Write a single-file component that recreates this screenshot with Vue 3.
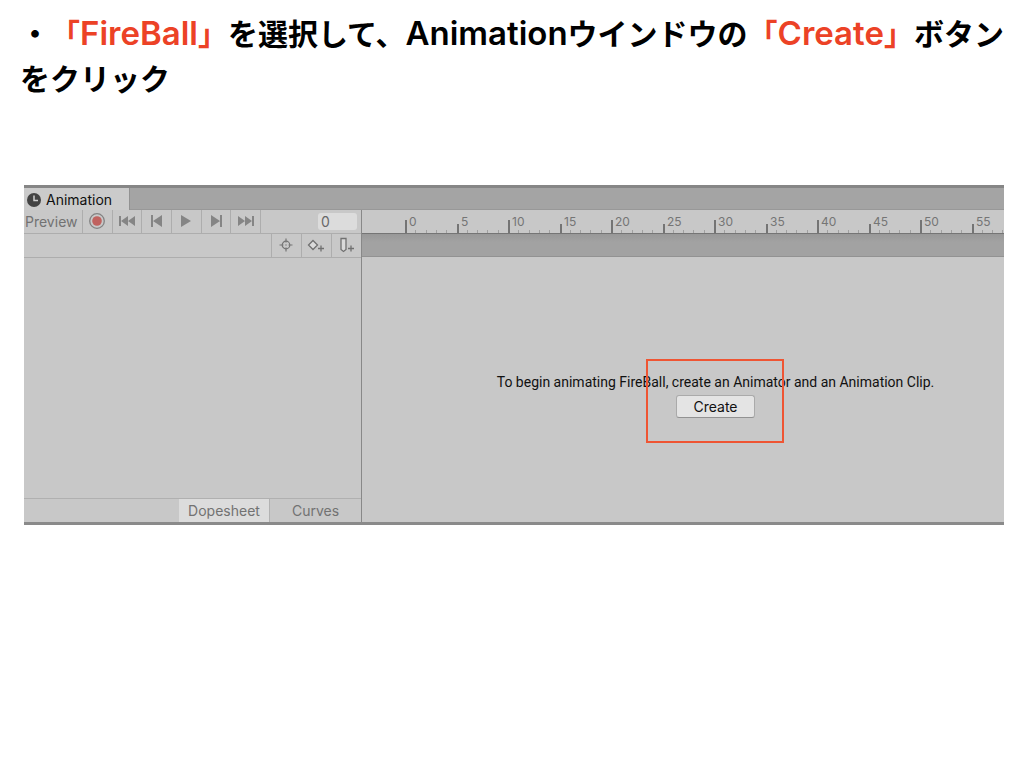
<script setup>
import { computed, onBeforeUnmount, onMounted, ref } from 'vue'

const frame = ref('0')
const mode = ref('Dopesheet')

const origin = 43
const ruler = ref(null)
const rulerWidth = ref(0)
let observer

onMounted(() => {
  const measure = () => {
    rulerWidth.value = ruler.value.getBoundingClientRect().width
  }
  measure()
  observer = new ResizeObserver(measure)
  observer.observe(ruler.value)
})
onBeforeUnmount(() => observer.disconnect())

const ticks = computed(() => {
  const count = Math.max(0, Math.floor((rulerWidth.value - origin) / 10.3) + 1)
  return Array.from({ length: count }, (_, n) => {
    const x = Math.round(origin + n * 10.3)
    if (n % 10 === 0) return { n, x, y: 10, kind: 'major' }
    if (n % 5 === 0) return { n, x, y: 14, kind: 'major' }
    return { n, x, y: 20, kind: 'minor' }
  })
})
const labels = computed(() => ticks.value.filter((t) => t.kind === 'major' && t.x + 20 < rulerWidth.value))

const transport = [
  { name: 'First frame', d: 'M1 3h2v10h-2zM10 3v10l-7-5zM17 3v10l-7-5z' },
  { name: 'Previous frame', d: 'M3 2h2v12h-2zM14 2v12l-9-6z' },
  { name: 'Play', d: 'M4 2l10 6l-10 6z' },
  { name: 'Next frame', d: 'M4 2v12l9-6zM13 2h2v12h-2z' },
  { name: 'Last frame', d: 'M1 3v10l7-5zM8 3v10l7-5zM15 3h2v10h-2z' },
]
</script>

<template>
  <main class="slide">
    <h1 class="title">
      ・<span class="hot">「<span class="latin">FireBall</span>」</span>を選択して、<span class="latin">Animation</span>ウインドウの<span class="hot">「<span class="latin">Create</span>」</span>ボタンをクリック
    </h1>

    <section class="window" aria-label="Animation">
      <header class="tabs">
        <div class="tab">
          <svg width="14" height="14" viewBox="0 0 14 14" aria-hidden="true">
            <circle cx="7" cy="7" r="7" fill="#434343" />
            <path d="M7 2.5v5h4" fill="none" stroke="#d0d0d0" stroke-width="1.5" />
          </svg>
          <span>Animation</span>
        </div>
      </header>

      <div class="body">
        <aside class="side">
          <div class="bar">
            <button class="preview" type="button">Preview</button>
            <div class="transport">
              <button class="tool" type="button" aria-label="Record">
                <svg width="18" height="18" viewBox="0 0 18 18">
                  <circle cx="9" cy="9" r="7.3" fill="none" stroke="#828282" stroke-width="1.3" />
                  <circle cx="9" cy="9" r="4.8" fill="#c0625f" />
                </svg>
              </button>
              <button v-for="t in transport" :key="t.name" class="tool" type="button" :aria-label="t.name">
                <svg width="18" height="16" viewBox="0 0 18 16"><path :d="t.d" fill="#858585" /></svg>
              </button>
            </div>
            <input v-model="frame" class="frame" type="text" aria-label="Current frame" />
          </div>

          <div class="bar bar-keys">
            <button class="tool key" type="button" aria-label="Filter by selection">
              <svg width="14" height="14" viewBox="0 0 14 14" fill="none" stroke="#747474" stroke-width="1.2">
                <circle cx="7" cy="7" r="3.8" />
                <path d="M7 0.5v4M7 9.5v4M0.5 7h4M9.5 7h4" />
                <circle cx="7" cy="7" r="0.7" fill="#747474" stroke="none" />
              </svg>
            </button>
            <button class="tool key" type="button" aria-label="Add keyframe">
              <svg width="18" height="18" viewBox="0 0 18 18" fill="none" stroke="#707070" stroke-width="1.3">
                <path d="M6 4.5l4.5 4.5l-4.5 4.5l-4.5-4.5z" fill="#dadada" />
                <path d="M14 9.5v6M11 12.5h6" />
              </svg>
            </button>
            <button class="tool key" type="button" aria-label="Add event">
              <svg width="18" height="18" viewBox="0 0 18 18" fill="none" stroke="#707070" stroke-width="1.3">
                <path d="M4 2.5h5v11l-2.5 2l-2.500-2z" fill="#dadada" />
                <path d="M14 9.5v6M11 12.5h6" />
              </svg>
            </button>
          </div>

          <div class="list"></div>

          <footer class="modes">
            <button
              v-for="m in ['Dopesheet', 'Curves']"
              :key="m"
              type="button"
              class="mode"
              :class="{ on: mode === m }"
              @click="mode = m"
            >{{ m }}</button>
          </footer>
        </aside>

        <div class="timeline">
          <svg ref="ruler" class="ruler" role="img" aria-label="Frames">
            <rect v-for="t in ticks" :key="t.n" :class="t.kind" :x="t.x" :y="t.y" :width="t.kind === 'major' ? 2 : 1" height="24" />
            <text v-for="t in labels" :key="t.n" :x="t.x + 4" y="16">{{ t.n }}</text>
          </svg>
          <div class="events"></div>
          <div class="stage">
            <div class="prompt">
              <p>To begin animating FireBall, create an Animator and an Animation Clip.</p>
              <button class="create" type="button">Create</button>
              <div class="callout"></div>
            </div>
          </div>
        </div>
      </div>
    </section>
  </main>
</template>

<style>
body {
  margin: 0;
  background: #fff;
}
</style>

<style scoped>
.slide {
  padding: 10px 0 24px;
  font-family: Inter, 'Noto Sans CJK JP', sans-serif;
}
.title {
  margin: 0 12px 85px 20px;
  font: 700 30px/45px 'Noto Sans CJK JP', sans-serif;
  text-spacing-trim: space-all;
  color: #000;
}
.latin {
  font-family: Inter, sans-serif;
  font-weight: 600;
  font-size: 33px;
  line-height: 1;
}
.hot {
  color: #ec4226;
}
.window {
  margin: 0 20px 0 24px;
  border-top: 3px solid #868686;
  border-bottom: 3px solid #8a8a8a;
  background: #c8c8c8;
  font-size: 14px;
  line-height: 20px;
}
button {
  margin: 0;
  padding: 0;
  border: 0;
  background: none;
  font: inherit;
  color: #727272;
}
svg {
  display: block;
  flex: none;
}
.tabs {
  display: flex;
  height: 22px;
  background: #a4a4a4;
  box-shadow: inset 0 -1px #989898;
}
.tab {
  display: flex;
  align-items: center;
  gap: 5px;
  box-sizing: border-box;
  width: 106px;
  padding: 2px 0 0 3px;
  border-right: 1px solid #929292;
  background: #cbcbcb;
  color: #101010;
}
.body {
  display: flex;
}
.side {
  display: flex;
  flex-direction: column;
  flex: none;
  width: 337px;
  border-right: 1px solid #888;
}
.bar {
  display: flex;
  align-items: center;
  height: 23px;
  border-bottom: 1px solid #adadad;
}
.preview {
  width: 58px;
  height: 100%;
  text-align: left;
  padding-left: 1px;
}
.transport {
  display: flex;
  width: 178px;
  height: 100%;
  border-right: 1px solid #adadad;
}
.tool {
  display: flex;
  align-items: center;
  justify-content: center;
  box-sizing: border-box;
  flex: 1;
  height: 100%;
  padding-bottom: 1px;
  border-left: 1px solid #adadad;
}
.tool.key {
  flex: none;
  width: 30px;
  padding: 0 2px 2px 0;
}
.frame {
  box-sizing: border-box;
  width: 39px;
  height: 17px;
  margin: 0 4px 0 auto;
  padding: 0 3px;
  border: 0;
  border-radius: 3px;
  background: #dcdcdc;
  font: inherit;
  color: #686868;
}
.bar-keys {
  justify-content: flex-end;
}
.list {
  flex: 1;
  min-height: 240px;
}
.modes {
  display: flex;
  justify-content: flex-end;
  height: 23px;
  border-top: 1px solid #b0b0b0;
}
.mode {
  box-sizing: border-box;
  width: 91px;
}
.mode.on {
  background: #dcdcdc;
  border-right: 1px solid #b2b2b2;
}
.timeline {
  flex: 1;
  min-width: 0;
  display: flex;
  flex-direction: column;
}
.ruler {
  width: 100%;
  height: 23px;
  overflow: hidden;
  font-size: 12px;
}
.ruler text {
  fill: #757575;
}
.major {
  fill: #747474;
}
.minor {
  fill: #a0a0a0;
}
.events {
  height: 22px;
  border-top: 1px solid #757575;
  border-bottom: 1px solid #929292;
  background: linear-gradient(#989898, #a2a2a2 8px);
}
.stage {
  flex: 1;
  display: flex;
  justify-content: center;
  align-items: flex-start;
  padding: 115px 0 0 65px;
}
.prompt {
  position: relative;
  display: flex;
  flex-direction: column;
  align-items: center;
  gap: 3px;
  color: #111;
}
.prompt p {
  margin: 0;
  font-family: Roboto, sans-serif;
  white-space: nowrap;
}
.create {
  box-sizing: border-box;
  width: 79px;
  height: 23px;
  border: 1px solid #aaa;
  border-bottom-color: #929292;
  border-radius: 3px;
  background: #e4e4e4;
  color: #111;
}
.callout {
  position: absolute;
  top: -13px;
  left: 50%;
  box-sizing: border-box;
  width: 138px;
  height: 84px;
  margin-left: -70px;
  border: 2px solid #ef5533;
  pointer-events: none;
}
</style>
